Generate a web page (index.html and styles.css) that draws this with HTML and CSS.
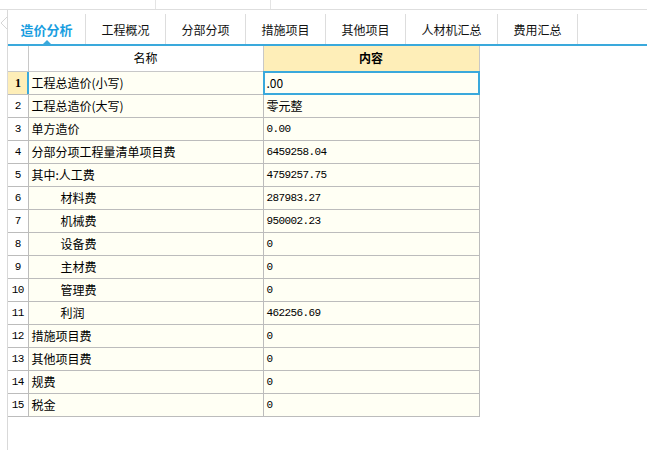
FILE: index.html
```html
<!DOCTYPE html>
<html lang="zh">
<head>
<meta charset="utf-8">
<link rel="stylesheet" href="styles.css">
</head>
<body>
<div class="topbar">
  <div class="seg seg1"></div>
  <div class="seg seg2"></div>
  <div class="seg seg3"></div>
</div>
<div class="page">
  <div class="gutter">
    <svg width="7" height="12" viewBox="0 0 7 12"><path d="M7 0 L1 6 L7 12" fill="none" stroke="#d6d6d6" stroke-width="1"/></svg>
  </div>
  <div class="content">
    <div class="tabs">
      <div class="tab active">造价分析<span class="caret"></span></div>
      <div class="tab">工程概况</div>
      <div class="tab">分部分项</div>
      <div class="tab">措施项目</div>
      <div class="tab">其他项目</div>
      <div class="tab wide">人材机汇总</div>
      <div class="tab">费用汇总</div>
    </div>
    <table class="grid">
      <colgroup><col class="c-num"><col class="c-name"><col class="c-val"></colgroup>
      <thead>
        <tr><th class="num"></th><th class="name">名称</th><th class="val">内容</th></tr>
      </thead>
      <tbody>
        <tr><td class="num cur">1</td><td class="name rowsel">工程总造价(小写)</td><td class="val cellsel">.00</td></tr>
        <tr><td class="num">2</td><td class="name">工程总造价(大写)</td><td class="val">零元整</td></tr>
        <tr><td class="num">3</td><td class="name">单方造价</td><td class="val mono">0.00</td></tr>
        <tr><td class="num">4</td><td class="name">分部分项工程量清单项目费</td><td class="val mono">6459258.04</td></tr>
        <tr><td class="num">5</td><td class="name">其中:人工费</td><td class="val mono">4759257.75</td></tr>
        <tr><td class="num">6</td><td class="name ind">材料费</td><td class="val mono">287983.27</td></tr>
        <tr><td class="num">7</td><td class="name ind">机械费</td><td class="val mono">950002.23</td></tr>
        <tr><td class="num">8</td><td class="name ind">设备费</td><td class="val mono">0</td></tr>
        <tr><td class="num">9</td><td class="name ind">主材费</td><td class="val mono">0</td></tr>
        <tr><td class="num">10</td><td class="name ind">管理费</td><td class="val mono">0</td></tr>
        <tr><td class="num">11</td><td class="name ind">利润</td><td class="val mono">462256.69</td></tr>
        <tr><td class="num">12</td><td class="name">措施项目费</td><td class="val mono">0</td></tr>
        <tr><td class="num">13</td><td class="name">其他项目费</td><td class="val mono">0</td></tr>
        <tr><td class="num">14</td><td class="name">规费</td><td class="val mono">0</td></tr>
        <tr><td class="num">15</td><td class="name">税金</td><td class="val mono">0</td></tr>
      </tbody>
    </table>
  </div>
</div>
</body>
</html>
```

FILE: styles.css
```css
* { box-sizing: border-box; }
html, body {
  margin: 0;
  padding: 0;
  width: 647px;
  height: 450px;
  overflow: hidden;
  background: #ffffff;
  font-family: "Noto Sans CJK SC", "Liberation Sans", sans-serif;
  color: #000;
}

.topbar {
  display: flex;
  height: 10px;
  border-bottom: 1px solid #dedede;
}
.seg { height: 9px; border-right: 1px solid #e4e4e4; }
.seg1 { width: 156px; }
.seg2 { width: 115px; }
.seg3 { flex: 1; border-right: none; }

.page {
  display: flex;
  height: 440px;
}
.gutter {
  width: 7px;
  padding-top: 7px;
}
.gutter svg { display: block; }

.content {
  flex: 1;
  border-left: 1px solid #d9d9d9;
}

.tabs {
  display: flex;
  height: 36px;
  padding-top: 4px;
  border-bottom: 2px solid #3aa9dc;
}
.tab {
  position: relative;
  width: 80px;
  height: 30px;
  border-right: 1px solid #dddddd;
  display: flex;
  align-items: center;
  justify-content: center;
  font-size: 12px;
  color: #111;
  padding-top: 1px;
}
.tab.active {
  width: 78px;
  font-size: 13px;
  font-weight: bold;
  color: #1a9ee0;
}
.tab.wide { width: 92px; }
.caret {
  position: absolute;
  left: 35px;
  bottom: 0;
  width: 0;
  height: 0;
  border-left: 4px solid transparent;
  border-right: 4px solid transparent;
  border-bottom: 4px solid #3aa9dc;
}

.grid {
  border-collapse: collapse;
  table-layout: fixed;
  width: 471px;
  font-size: 12px;
}
.c-num { width: 20px; }
.c-name { width: 235px; }
.c-val { width: 216px; }

.grid th {
  height: 25px;
  font-weight: normal;
  border-right: 1px solid #c8c8c8;
  border-bottom: 1px solid #c8c8c8;
  background: #ffffff;
  padding: 0;
  line-height: 24px;
}
.grid th.val {
  background: #feeeb8;
  font-weight: bold;
}
.grid td {
  height: 23px;
  padding: 0 0 0 3px;
  border-right: 1px solid #bcbcbc;
  border-bottom: 1px solid #bcbcbc;
  background: #fffff4;
  white-space: nowrap;
  line-height: 22px;
}
.grid td.num {
  background: #ffffff;
  text-align: center;
  padding: 0;
  font-family: "Liberation Mono", "DejaVu Sans Mono", monospace;
  font-size: 11px;
  letter-spacing: -0.5px;
}
.grid td.num.cur {
  background: #feeeb8;
  font-weight: bold;
  font-family: "Liberation Serif", serif;
  font-size: 12px;
}
.grid td.ind { padding-left: 32px; }
.grid td.mono {
  font-family: "Liberation Mono", "DejaVu Sans Mono", monospace;
  font-size: 11px;
  letter-spacing: -0.6px;
}
.grid td.val { padding-left: 3px; }

.rowsel { position: relative; }
.rowsel::before {
  content: "";
  position: absolute;
  left: -2px;
  top: 0;
  bottom: 0;
  width: 2px;
  background: #3aa9dc;
}
.cellsel { position: relative; }
.cellsel::after {
  content: "";
  position: absolute;
  left: -1px;
  top: -1px;
  right: -1px;
  bottom: -1px;
  border: 2px solid #3aa9dc;
}
```
